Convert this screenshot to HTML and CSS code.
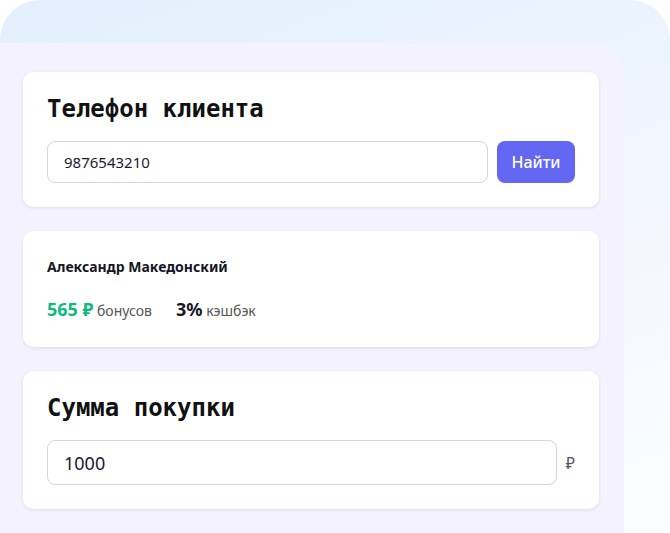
FILE: index.html
```html
<!DOCTYPE html>
<html><head>
  <meta charset="utf-8">
  <title>Кэшбэк</title>
<link rel="stylesheet" href="styles.css">
</head>
<body>
<div id="shell">
<div id="panel">

 <div class="card">
  <h2>Телефон клиента</h2>
  <div class="row">
   <input class="field" type="text" value="9876543210">
   <button class="find">Найти</button>
  </div>
 </div><!-- card -->

 <div class="card client">
  <div class="name">Александр Македонский</div>
  <div class="stats">
   <span class="stat"><b class="bonus">565 ₽</b> бонусов</span>
   <span class="stat"><b>3%</b> кэшбэк</span>
  </div>
 </div><!-- card -->

 <div class="card">
  <h2>Сумма покупки</h2>
  <div class="row">
   <input class="field big" type="text" value="1000">
   <span class="cur">₽</span>
  </div>
 </div><!-- card -->

</div><!-- panel -->
</div><!-- shell -->
</body></html>
```
FILE: styles.css
```css
body{
  margin: 0;
  background: #fff;
  font-family: "Noto Sans", sans-serif;
  color: #1a1a2e;
}
div#shell{
  width: 670px;
  min-height: 533px;
  box-sizing: border-box;
  padding-top: 43px;
  border-radius: 40px 40px 0 0;
  background: linear-gradient(160deg, #e3effd 0%, #eef5fe 45%, #fcfdff 100%);
  overflow: hidden;
}
div#panel{
  width: 624px;
  min-height: 490px;
  box-sizing: border-box;
  padding: 29px 25px 20px 23px;
  border-top-right-radius: 30px;
  background: #f4f2fe;
  display: flex;
  flex-direction: column;
  gap: 24px;
}
div.card{
  background: #fff;
  border-radius: 10px;
  box-shadow: 0 1px 3px rgba(60,60,100,0.12);
  padding: 22px 24px 24px;
}
h2{
  margin: 0 0 17px;
  font-family: "DejaVu Sans Mono", monospace;
  font-size: 24px;
  line-height: 30px;
  font-weight: bold;
  color: #111;
}
div.row{
  display: flex;
  align-items: center;
  gap: 9px;
}
input.field{
  flex: 1;
  min-width: 0;
  height: 42px;
  box-sizing: border-box;
  border: 1px solid #d5d5de;
  border-radius: 8px;
  padding: 0 16px;
  font-family: "Noto Sans", sans-serif;
  font-size: 15px;
  color: #1a1a2e;
  outline: none;
}
input.big{
  height: 45px;
  font-size: 18px;
}
button.find{
  height: 42px;
  width: 78px;
  border: none;
  border-radius: 8px;
  background: #6366f1;
  color: #fff;
  font-family: "Noto Sans", sans-serif;
  font-size: 16px;
  font-weight: 500;
}
span.cur{
  font-size: 16px;
  color: #555;
}
div.client{
  padding: 26px 24px 26px;
}
div.name{
  font-size: 14px;
  font-weight: bold;
  line-height: 20px;
  color: #161625;
}
div.stats{
  margin-top: 20px;
  display: flex;
  gap: 24px;
  align-items: baseline;
  font-size: 14px;
  color: #555;
}
div.stats b{
  font-size: 18px;
  color: #161625;
}
div.stats b.bonus{
  color: #10b981;
}
```
